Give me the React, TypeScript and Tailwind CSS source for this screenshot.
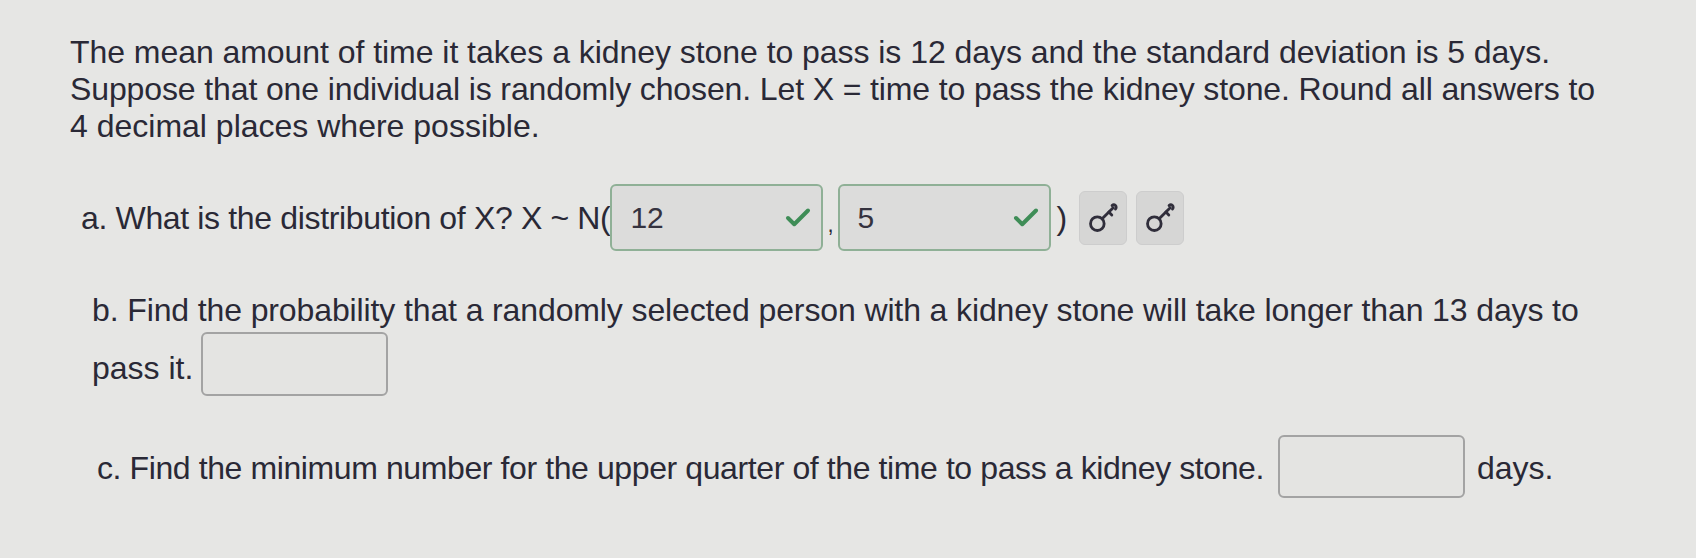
import { Check } from 'lucide-react'

const font = { fontFamily: '"Liberation Sans", Arial, sans-serif' }

function KeyIcon() {
  return (
    <svg viewBox="0 0 24 24" className="h-[34px] w-[34px]" fill="none" stroke="#302e3b" strokeWidth="2" strokeLinecap="round">
      <circle cx="8" cy="16" r="4.8" />
      <path d="M11.4 12.6 L19.2 4.8" />
      <path d="M16.2 7.8 L18.2 9.8" />
      <path d="M18.4 3.2 A1.6 1.6 0 1 1 20.8 5.6" />
    </svg>
  )
}

function AnsweredBox({ value }: { value: string }) {
  return (
    <div className="flex h-[67px] w-[213px] items-center justify-between rounded-[6px] border-2 border-[#8fb096] bg-[#dcdcdb] pl-[18px] pr-[8px]">
      <span className="text-[30px] text-[#35333f]">{value}</span>
      <Check className="h-[30px] w-[30px] text-[#3f8d57]" strokeWidth={3.2} />
    </div>
  )
}

function EmptyBox({ className }: { className: string }) {
  return <div className={`rounded-[6px] border-2 border-[#a3a3a3] bg-[#e4e4e2] ${className}`} />
}

function KeyButton() {
  return (
    <div className="flex h-[54px] w-[48px] items-center justify-center rounded-[6px] border border-[#cdcdcd] bg-[#d6d6d5]">
      <KeyIcon />
    </div>
  )
}

export default function App() {
  return (
    <div className="h-[558px] w-[1696px] overflow-hidden bg-[#e6e6e4] text-[32px] text-[#2a2936]" style={font}>
      {/* Problem statement */}
      <div className="whitespace-nowrap pl-[70px] pt-[34px] leading-[37px]">
        <div className="tracking-[-0.05px]">The mean amount of time it takes a kidney stone to pass is 12 days and the standard deviation is 5 days.</div>
        <div className="tracking-[-0.12px]">Suppose that one individual is randomly chosen. Let X = time to pass the kidney stone. Round all answers to</div>
        <div>4 decimal places where possible.</div>
      </div>

      {/* Part a */}
      <div className="mt-[39px] flex h-[67px] items-center whitespace-nowrap pl-[81px]">
        <span className="tracking-[-0.35px]">a. What is the distribution of X? X ~ N(</span>
        <AnsweredBox value="12" />
        <span className="mx-[4px] self-end pb-[10px] text-[22px]">,</span>
        <AnsweredBox value="5" />
        <span className="ml-[6px] mr-[12px]">)</span>
        <div className="flex gap-[9px]">
          <KeyButton />
          <KeyButton />
        </div>
      </div>

      {/* Part b */}
      <div className="mt-[41px] whitespace-nowrap pl-[92px] leading-[37px] tracking-[-0.12px]">
        b. Find the probability that a randomly selected person with a kidney stone will take longer than 13 days to
      </div>
      <div className="mt-[3px] flex h-[64px] items-center gap-[8px] pl-[92px]">
        <span className="pt-[8px]">pass it.</span>
        <EmptyBox className="h-[64px] w-[187px]" />
      </div>

      {/* Part c */}
      <div className="mt-[39px] flex h-[63px] items-center whitespace-nowrap pl-[97px]">
        <span className="mr-[14px] pt-[2px] tracking-[-0.4px]">c. Find the minimum number for the upper quarter of the time to pass a kidney stone.</span>
        <EmptyBox className="h-[63px] w-[187px]" />
        <span className="ml-[12px] pt-[2px]">days.</span>
      </div>
    </div>
  )
}
